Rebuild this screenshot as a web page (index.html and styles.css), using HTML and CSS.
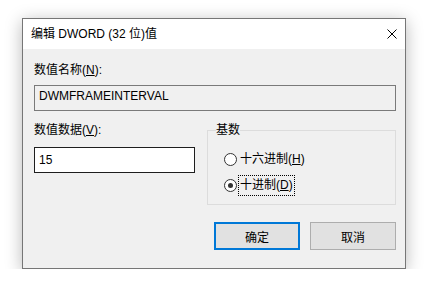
FILE: index.html
```html
<!DOCTYPE html>
<html lang="zh-CN">
<head>
  <meta charset="UTF-8" />
  <title>编辑 DWORD (32 位)值</title>
  <link rel="stylesheet" href="styles.css">
</head>
<body>
  <div class="window">
    <div class="titlebar">
      <span class="title">编辑 DWORD (32 位)值</span>
      <svg class="close" width="10" height="10" viewBox="0 0 10 10">
        <path d="M0.5 0.5 L9.5 9.5 M9.5 0.5 L0.5 9.5" stroke="#000" stroke-width="1" fill="none" />
      </svg>
    </div>

    <div class="content">
      <div class="label">数值名称(<u>N</u>):</div>
      <div class="field field-ro">DWMFRAMEINTERVAL</div>

      <div class="row">
        <div class="col">
          <div class="label">数值数据(<u>V</u>):</div>
          <div class="field field-edit">15</div>
        </div>

        <fieldset class="base">
          <legend>基数</legend>
          <div class="radio">
            <span class="circle"></span>
            <span class="text">十六进制(<u>H</u>)</span>
          </div>
          <div class="radio checked">
            <span class="circle"></span>
            <span class="text focus">十进制(<u>D</u>)</span>
          </div>
        </fieldset>
      </div>

      <div class="buttons">
        <button class="btn btn-default">确定</button>
        <button class="btn">取消</button>
      </div>
    </div>
  </div>
</body>
</html>
```

FILE: styles.css
```css
* {
  box-sizing: border-box;
}

body {
  margin: 0;
  padding: 18px 0 0 22px;
  background-color: #ffffff;
  font-family: "Liberation Sans", "Noto Sans CJK SC", sans-serif;
  font-size: 12px;
  line-height: 16px;
  color: #000000;
}

.window {
  width: 384px;
  border: 1px solid #767676;
  background-color: #f0f0f0;
  box-shadow: 0 3px 16px rgba(0, 0, 0, 0.28);
}

.titlebar {
  height: 30px;
  background-color: #ffffff;
  display: flex;
  align-items: center;
  justify-content: space-between;
  padding: 0 8px 0 8px;
}

.close {
  display: block;
  margin-top: -1px;
}

.content {
  padding: 13px 9px 18px 11px;
}

.label {
  height: 16px;
}

.field {
  height: 26px;
  padding: 2px 4px 0;
  line-height: 16px;
}

.field-ro {
  margin-top: 7px;
  border: 1px solid #7a7a7a;
  background-color: #f0f0f0;
}

.row {
  display: flex;
  align-items: flex-start;
  gap: 12px;
  margin-top: 11px;
}

.col {
  width: 161px;
}

.field-edit {
  margin-top: 9px;
  border: 1px solid #1e1e1e;
  background-color: #ffffff;
  padding-top: 4px;
}

.base {
  flex: 1;
  margin: 0;
  min-width: 0;
  height: 83px;
  padding: 11px 0 0 16px;
  border: 1px solid #dcdcdc;
}

.base legend {
  padding: 0;
  margin-left: -8px;
  line-height: 16px;
}

.radio {
  display: flex;
  align-items: center;
  height: 20px;
}

.radio + .radio {
  margin-top: 6px;
}

.circle {
  width: 13px;
  height: 13px;
  border: 1px solid #333333;
  border-radius: 50%;
  background-color: #ffffff;
  padding: 3px;
}

.checked .circle::after {
  content: "";
  display: block;
  width: 5px;
  height: 5px;
  border-radius: 50%;
  background-color: #333333;
}

.radio .text {
  margin-left: 3px;
  padding: 1px 0 2px;
}

.focus {
  outline: 1px dotted #000000;
  margin-left: 2px !important;
  padding: 1px 1px 2px !important;
}

.buttons {
  display: flex;
  justify-content: flex-end;
  gap: 10px;
  margin-top: 17px;
}

.btn {
  width: 86px;
  height: 28px;
  border: 1px solid #adadad;
  background-color: #e1e1e1;
  font-family: inherit;
  font-size: 12px;
  color: #000000;
  padding: 0;
}

.btn-default {
  border: 2px solid #0078d7;
}
```
